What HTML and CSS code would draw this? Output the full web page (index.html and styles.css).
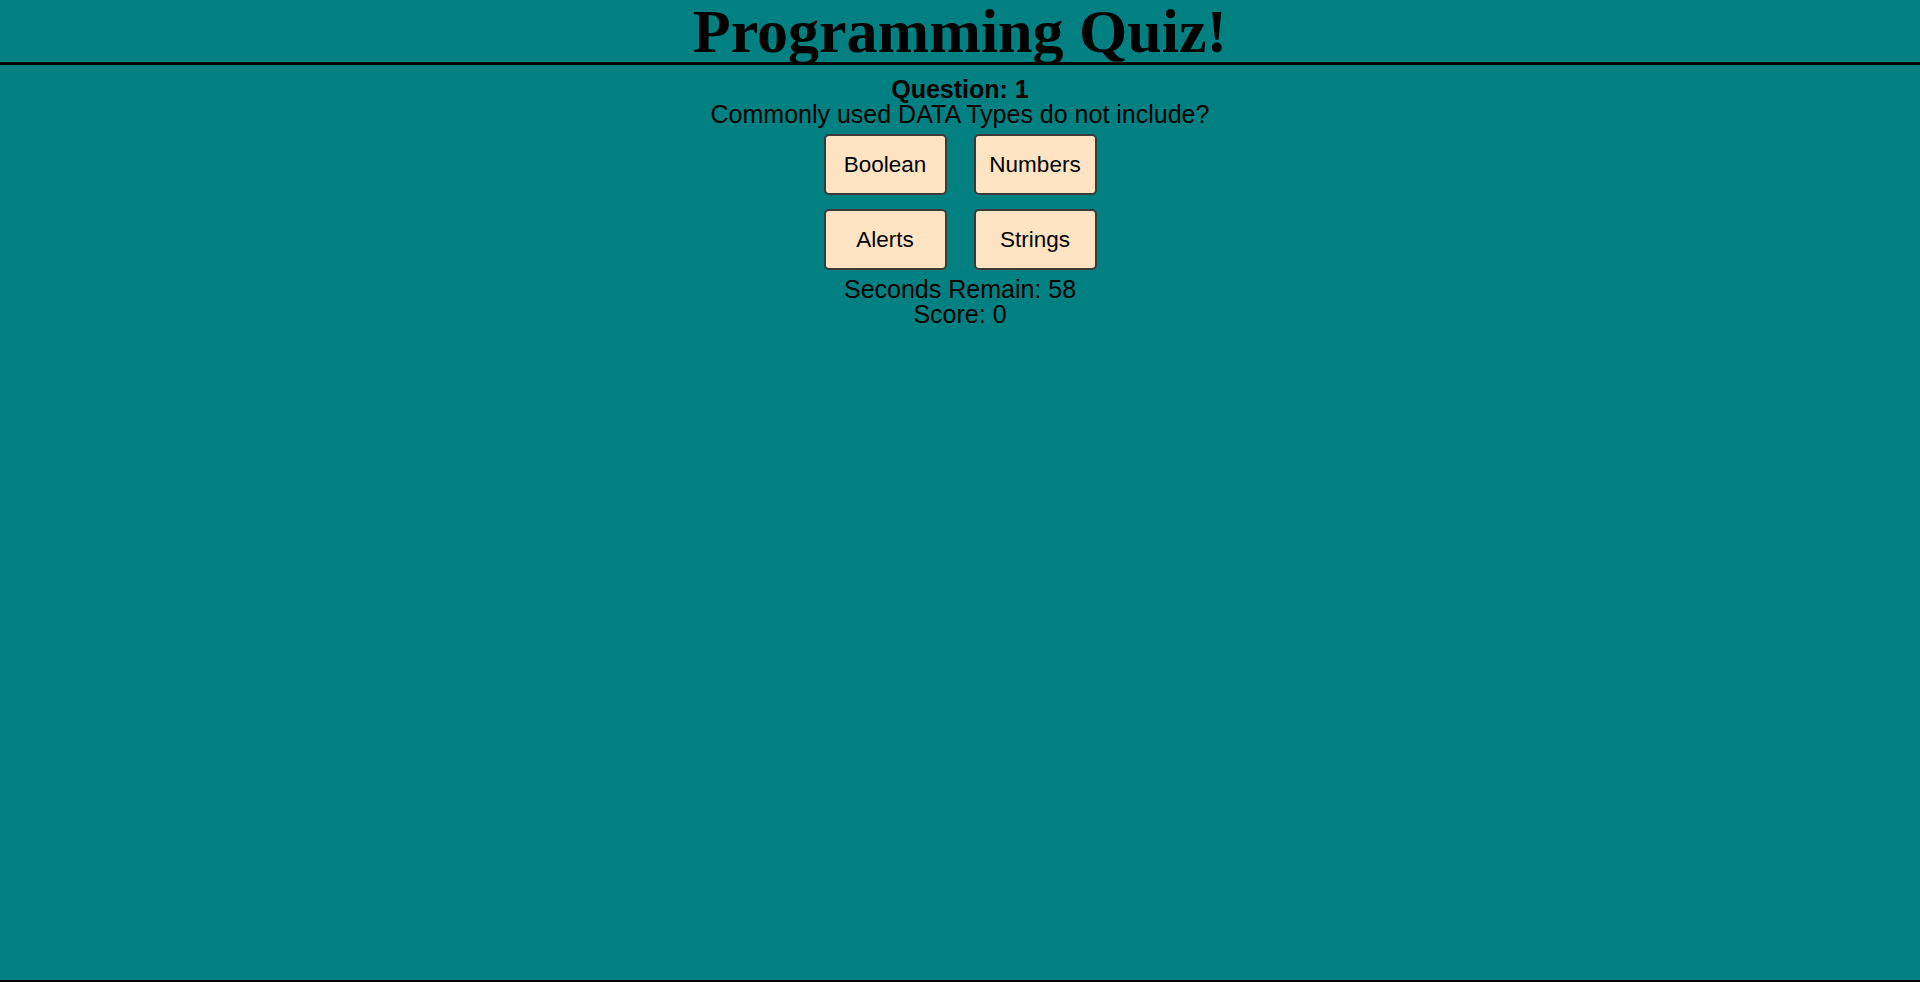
FILE: index.html
```html
<!DOCTYPE html>
<html lang="en">
<head>
<meta charset="utf-8">
<title>Programming Quiz!</title>
<link rel="stylesheet" href="styles.css">
</head>
<body>
<div class="page">
  <header class="header">
    <h1 class="title">Programming Quiz!</h1>
  </header>
  <main class="quiz">
    <div class="question-number">Question: 1</div>
    <div class="question-text">Commonly used DATA Types do not include?</div>
    <div class="answers">
      <button class="answer">Boolean</button>
      <button class="answer">Numbers</button>
      <button class="answer">Alerts</button>
      <button class="answer">Strings</button>
    </div>
    <div class="status">Seconds Remain: 58</div>
    <div class="status">Score: 0</div>
  </main>
</div>
</body>
</html>
```

FILE: styles.css
```css
html, body {
  margin: 0;
  padding: 0;
  height: 100%;
}
body {
  background: #008080;
  color: #000;
  font-family: "Liberation Sans", Arial, sans-serif;
}
.page {
  height: 100%;
  box-sizing: border-box;
  border-bottom: 2px solid #000;
  display: flex;
  flex-direction: column;
}
.header {
  border-bottom: 3px solid #000;
}
.title {
  margin: 0;
  font-family: "Liberation Serif", "Times New Roman", serif;
  font-weight: bold;
  font-size: 62px;
  line-height: 62px;
  text-align: center;
}
.quiz {
  display: flex;
  flex-direction: column;
  align-items: center;
  padding-top: 12px;
  font-size: 25px;
  line-height: 25px;
}
.question-number {
  font-weight: bold;
}
.answers {
  display: grid;
  grid-template-columns: 123px 123px;
  column-gap: 27px;
  row-gap: 14px;
  margin: 7px 0;
}
.answer {
  height: 61px;
  background: #ffe4c4;
  border: 2px solid #3a3a3a;
  border-radius: 5px;
  font-family: "Liberation Sans", Arial, sans-serif;
  font-size: 22.5px;
  color: #000;
  padding: 0;
}
```
